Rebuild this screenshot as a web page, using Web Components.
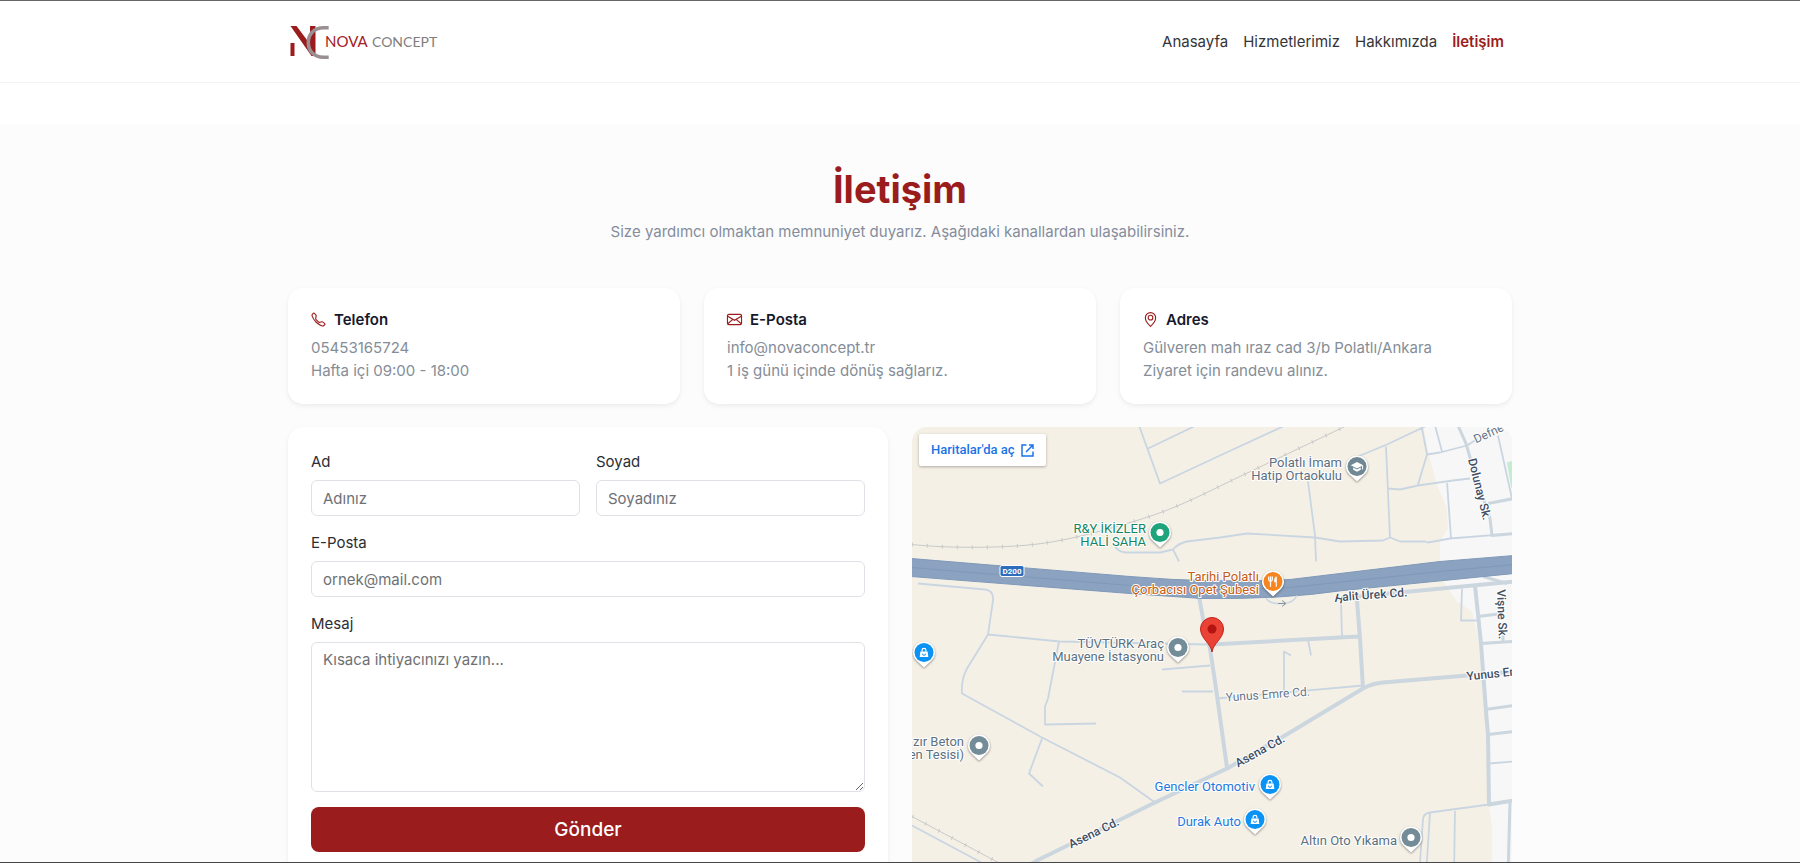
<!DOCTYPE html>
<html lang="tr">
<head>
<meta charset="utf-8">
<meta name="viewport" content="width=device-width, initial-scale=1">
<title>İletişim – Nova Concept</title>
<style>
  body { margin: 0; font: 15px/23px Inter, "Liberation Sans", sans-serif; color: #2b2e33; }
</style>
</head>
<body>
<nova-page>
  <nova-header slot="header">
    <a href="#anasayfa">Anasayfa</a>
    <a href="#hizmetlerimiz">Hizmetlerimiz</a>
    <a href="#hakkimizda">Hakkımızda</a>
    <a href="#iletisim" aria-current="page">İletişim</a>
  </nova-header>
  <contact-intro>
    <span slot="title">İletişim</span>
    Size yardımcı olmaktan memnuniyet duyarız. Aşağıdaki kanallardan ulaşabilirsiniz.
  </contact-intro>
  <card-row columns="3">
    <info-card icon="phone"><span slot="title">Telefon</span><div>05453165724</div><div>Hafta içi 09:00 - 18:00</div></info-card>
    <info-card icon="mail"><span slot="title">E-Posta</span><div>info@novaconcept.tr</div><div>1 iş günü içinde dönüş sağlarız.</div></info-card>
    <info-card icon="pin"><span slot="title">Adres</span><div>Gülveren mah ıraz cad 3/b Polatlı/Ankara</div><div>Ziyaret için randevu alınız.</div></info-card>
  </card-row>
  <card-row columns="2">
    <contact-form></contact-form>
    <location-map></location-map>
  </card-row>
</nova-page>

<script>
const define = (name, html, setup) => {
  const template = document.createElement('template');
  template.innerHTML = html;
  customElements.define(name, class extends HTMLElement {
    constructor() {
      super();
      this.attachShadow({ mode: 'open' }).append(template.content.cloneNode(true));
    }
    connectedCallback() { if (setup) setup(this, this.shadowRoot); }
  });
};

define('nova-page', `
<style>
  :host { display: block; box-sizing: border-box; height: 100vh; overflow: auto; scrollbar-width: none;
    border-top: 1px solid #66656a; border-bottom: 1px solid #47474a; background: #fff; }
  main { margin-top: 41px; padding: 42px 24px 45px; background: #fcfcfd; }
  .inner { max-width: 1224px; margin: 0 auto; display: grid; gap: 23px; }
</style>
<slot name="header"></slot>
<main><div class="inner"><slot></slot></div></main>`);

define('nova-logo', `
<style>
  :host { display: block; }
  a, svg { display: block; }
  text { font-family: Lato, "Liberation Sans", sans-serif; font-size: 15px; }
</style>
<a href="#anasayfa" aria-label="Nova Concept">
<svg width="160" height="36" viewBox="0 0 160 36">
  <g fill="#9b1c1c">
    <path d="M2.5 19h4v13h-4zM2.500 2h6L22 20V2h5.500v30h-4z"/>
  </g>
  <path d="M40.700 3.800h-5.200C26 3.800 20.300 10 20.300 18.500S26 33.200 35.500 33.200h5.200" fill="none" stroke="#9a9093" stroke-width="3.600"/>
  <text x="37" y="23" fill="#a32025">NOVA</text>
  <text x="84" y="23" fill="#827d7d" style="font-size:14px">CONCEPT</text>
</svg></a>`);

define('nova-header', `
<style>
  :host { display: block; padding: 0 24px; border-bottom: 1px solid #f3f3f4; background: #fff; }
  .bar { max-width: 1224px; height: 81px; margin: 0 auto; display: flex; align-items: center; justify-content: space-between; }
  nav { display: flex; gap: 15px; padding-right: 8px; }
  ::slotted(a) { color: #333538; text-decoration: none; }
  ::slotted(a[aria-current]) { color: #9b1c1c; font-weight: 600; }
</style>
<div class="bar"><nova-logo></nova-logo><nav><slot></slot></nav></div>`);

define('contact-intro', `
<style>
  :host { display: block; text-align: center; margin-bottom: 22px; }
  h1 { margin: 0 0 8px; font-size: 38px; line-height: 46px; font-weight: 700; color: #9b1c1c; }
  p { margin: 0; color: #858d9b; }
</style>
<h1><slot name="title"></slot></h1><p><slot></slot></p>`);

define('card-row', `
<style>
  :host { display: grid; gap: 24px; grid-template-columns: repeat(2, minmax(0, 1fr)); }
  :host([columns="3"]) { grid-template-columns: repeat(3, minmax(0, 1fr)); }
  @media (max-width: 760px) { :host, :host([columns="3"]) { grid-template-columns: minmax(0, 1fr); } }
</style>
<slot></slot>`);

const icons = {
  phone: '<path d="M3.654 1.328a.678.678 0 0 0-1.015-.063L1.605 2.300c-.483.484-.661 1.169-.450 1.770a17.600 17.600 0 0 0 4.168 6.608 17.600 17.600 0 0 0 6.608 4.168c.601.211 1.286.033 1.770-.450l1.034-1.034a.678.678 0 0 0-.063-1.015l-2.307-1.794a.680.680 0 0 0-.580-.122l-2.190.547a1.750 1.750 0 0 1-1.657-.459L5.482 8.062a1.750 1.750 0 0 1-.460-1.657l.548-2.190a.680.680 0 0 0-.122-.580z"/>',
  mail: '<rect x=".5" y="2.500" width="15" height="11" rx="1.500"/><path d="M.8 4.500 8 8.900l7.200-4.400M.8 12.500l5.400-4.600M15.200 12.500l-5.400-4.600"/>',
  pin: '<path d="M8 15.400s5.500-5 5.500-9.200a5.500 5.500 0 0 0-11 0C2.500 10.400 8 15.400 8 15.400z"/><circle cx="8" cy="6" r="2.500"/>'
};
define('info-card', `
<style>
  :host { display: block; padding: 22px 23px; border-radius: 15px; background: #fff; box-shadow: 0 2px 5px rgba(0,0,0,.07); color: #858d97; }
  h2 { display: flex; align-items: center; gap: 8px; margin: 0 0 7px; font-size: 15px; line-height: 19px; font-weight: 600; color: #15182a; }
  svg { width: 15px; height: 15px; fill: none; stroke: #9b1c1c; stroke-width: 1.200; overflow: visible; }
</style>
<h2><svg viewBox="0 0 16 16" aria-hidden="true"></svg><slot name="title"></slot></h2>
<slot></slot>`, (el, root) => {
  root.querySelector('svg').innerHTML = icons[el.getAttribute('icon')];
});

define('contact-form', `
<style>
  :host { display: block; padding: 23px; border-radius: 15px; background: #fff; box-shadow: 0 2px 5px rgba(0,0,0,.07); }
  form { display: grid; grid-template-columns: 1fr 1fr; gap: 15px 16px; }
  .field { display: grid; gap: 7px; min-width: 0; }
  .wide { grid-column: 1 / -1; }
  label { color: #2b2e33; }
  input, textarea { box-sizing: border-box; width: 100%; min-width: 0; margin: 0; padding: 5px 11px; border: 1px solid #dee2e6;
    border-radius: 6px; background: #fff; font: inherit; color: inherit; display: block; outline: none; }
  input { height: 36px; }
  textarea { height: 150px; resize: vertical; }
  ::placeholder { color: #6e7174; opacity: 1; }
  button { height: 45px; border: 0; border-radius: 8px; background: #9b1c1c; color: #fff; font: 500 19px/28px Inter, "Liberation Sans", sans-serif; cursor: pointer; }
</style>
<form>
  <div class="field"><label for="ad">Ad</label><input id="ad" type="text" placeholder="Adınız"></div>
  <div class="field"><label for="soyad">Soyad</label><input id="soyad" type="text" placeholder="Soyadınız"></div>
  <div class="field wide"><label for="eposta">E-Posta</label><input id="eposta" type="email" placeholder="ornek@mail.com"></div>
  <div class="field wide"><label for="mesaj">Mesaj</label><textarea id="mesaj" placeholder="Kısaca ihtiyacınızı yazın..."></textarea></div>
  <button class="wide" type="button">Gönder</button>
</form>`);

const glyphs = {
  dot: '<circle r="3.600" fill="#fff"/>',
  bag: '<path d="M-3.600-1h7.200L4.300 4.500h-8.600z" fill="#fff"/><path d="M-1.900-1v-1.200a1.900 1.900 0 0 1 3.800 0V-1" fill="none" stroke="#fff" stroke-width="1.200"/><path d="M-1.600 1.200a1.600 1.600 0 0 0 3.200 0" fill="none" stroke="#0a93f5"/>',
  school: '<path d="M0-4.500 6.200-1.200 0 2.100l-6.200-3.300z" fill="#fff"/><path d="M-3.800 1v2.300L0 5.300l3.800-2V1L0 3z" fill="#fff"/><path d="M5.600-1v4" stroke="#fff"/>',
  food: '<path d="M-4.300-5v3a1.800 1.800 0 0 0 3.600 0v-3M-2.500-5V5.200" fill="none" stroke="#fff" stroke-width="1.200"/><path d="M3.800-5C1.800-5 1-3 1.200.8h1.500v4.400h1.100z" fill="#fff"/>'
};
const pin = (x, y, color, glyph = 'dot') => `
  <g transform="translate(${x} ${y})" class="poi"><path d="M0 15-7.500 8A11 11 0 1 1 7.500 8z" fill="#fff"/><circle r="9.500" fill="${color}"/>${glyphs[glyph]}</g>`;
const label = (x, y, color, lines) => lines.map((t, i) => `<text x="${x}" y="${y + 13 * i}" text-anchor="end" fill="${color}">${t}</text>`).join('');
const street = (x, y, angle, text, cls = 'street', turn = '') => `<text class="${cls}" transform="translate(${x} ${y}) rotate(${angle})" ${turn && `rotate="${turn}"`}>${text}</text>`;

define('location-map', `
<style>
  :host { display: block; position: relative; min-height: 448px; border-radius: 15px; overflow: hidden; background: #f5f0e6; }
  svg.map { display: block; width: 100%; height: 100%; position: absolute; inset: 0; }
  text { font-family: Roboto, "Liberation Sans", sans-serif; font-size: 13px; paint-order: stroke; stroke: #fff; stroke-width: 2px; stroke-linejoin: round; }
  .street { font-size: 12px; font-weight: 500; fill: #414e62; }
  .side { font-size: 12px; fill: #687586; }
  .sign { font-size: 8px; font-weight: 700; fill: #fff; stroke: none; }
  .minor, .major { fill: none; stroke: #c9d6e2; stroke-width: 1.800; stroke-linejoin: round; }
  .major { stroke: #cbd6df; stroke-width: 4; }
  .poi { filter: drop-shadow(0 1px 1px rgba(0,0,0,.4)); }
  a { position: absolute; top: 7px; left: 7px; box-sizing: border-box; height: 32px; padding: 0 12px; display: flex; align-items: center; gap: 6px;
    background: #fff; border-radius: 2px; box-shadow: 0 1px 3px rgba(0,0,0,.3); color: #1a73e8; text-decoration: none;
    font: 500 13px/20px Roboto, "Liberation Sans", sans-serif; }
</style>
<svg class="map" viewBox="0 0 600 449" preserveAspectRatio="xMidYMid slice" aria-label="Harita">
  <path fill="#f7f7f7" d="M511-1 517 28 525 59 535 82 536 102 528 115V150L545 175 560 185 566 210 573 285 577 378 580 400V450H602V-1z"/>
  <path fill="#c3ecd0" d="M595 36 602 34V67L599 60z"/>
  <g fill="none" stroke="#c8c9c9">
    <path d="M0 118C28 121 71 122 111 119S188 105 228 93 300 63 330 49L435-1M0 390 105 446"/>
    <path stroke-width="4" stroke-dasharray="1 14" d="M0 118C28 121 71 122 111 119S188 105 228 93 300 63 330 49L435-1M0 390 105 446"/>
  </g>
  <path class="minor" d="M227-1 248 57 308 29 373-1M236 22 284-1M203 120Q207 126 215 126H248L261 123Q266 117 275 115L308 111 335 107 403 111 428 115 471 114 478 111 488 115H513L516 116 538 112 602 107M261 123 267 135
    M6 157 73 163Q82 164 81 174L76 208 55 242Q49 253 50 267L130 311 208 351 243 376M76 208 148 215 296 218M147 215 136 272 133 280V298L184 297M130 312 117 347 131 360M250 243 298 239M270 265H301M0 399 88 446
    M429 175 430 210M372 265V225L379 229M396 213 399 229M305 272 451 259M550 162 549 194H565M441 32 475 18 515-1M474 20 478 111M396 55 403 109 404 135M476 62 488 63 506 59 541 54 558 52M510 2 515 28 506 58M515 28 528 26 555 19 566 12M523-1 530 25M586 9 600 72M535 55 539 112M577 337 602 335
    M577 378 518 386Q511 387 511 393L507 450M518 386 514 450M543 383 542 450"/>
  <path class="major" d="M287 170 291 192 298 222 303 255 315 341M105 446 125 434 243 376 315 342 373 309 451 262Q460 257 471 256L555 249 602 245M300 218 446 210M445 174 448 212 451 262M430 171 498 165 602 155M563 159 569 217 574 285 576 308 577 378 602 374"/>
  <path class="major" style="stroke-width:3" d="M546-1 554 17 560 38 578 92 580 109 602 107M576 77 602 72M566 190 590 187M569 217 602 215M591 217V209M573 283 602 279M576 308 602 305M598 375 596 450M571 150 595 157"/>
  <path fill="#8ba3c0" d="M-1 132 218 150Q300 157 378 153L528 135 602 129V147L431 164Q370 173 290 172L218 167-1 150z"/>
  <path fill="none" stroke="#7f99b9" d="M-1 132 218 150Q300 157 378 153L528 135 602 129M-1 141 218 159Q310 166 378 161L528 145 602 138M602 147 431 164Q370 173 290 172L218 167-1 150"/>
  <path fill="none" stroke="#c9d6e2" stroke-width="1.500" d="M354 172Q358 177 366 177H372Q382 176 385 169"/>
  <path fill="none" stroke="#8796a1" d="M366 177H373M370 174 374 177 370 180"/>
  <rect x="88" y="139" width="24" height="11" rx="2" fill="#2d6dbb" stroke="#fff"/>
  <text class="sign" x="100" y="147" text-anchor="middle">D200</text>

  ${label(430, 40, '#5b7080', ['Polatlı İmam', 'Hatip Ortaokulu'])}
  ${label(234, 106, '#16845f', ['R&amp;Y İKİZLER', 'HALİ SAHA'])}
  ${label(347, 154, '#c65c14', ['Tarihi Polatlı', 'Çorbacısı Opet Şubesi'])}
  ${label(252, 221, '#5b7080', ['TÜVTÜRK Araç', 'Muayene İstasyonu'])}
  ${label(52, 319, '#5b7080', ['zır Beton', 'en Tesisi)'])}
  ${label(343, 364, '#2478e0', ['Gencler Otomotiv'])}
  ${label(329, 399, '#2478e0', ['Durak Auto'])}
  ${label(485, 418, '#5b7080', ['Altın Oto Yıkama'])}
  ${street(314, 275, -4, 'Yunus Emre Cd.', 'side')}
  ${street(564, 17, -25, 'Defne', 'side')}
  ${street(326, 341, -29, 'Asena Cd.')}
  ${street(159, 422, -26, 'Asena Cd.')}
  ${street(422, 175, -4, 'Halit Ürek Cd.', 'street', '20 0')}
  ${street(556, 33, 76, 'Dolunay Sk.')}
  ${street(585, 163, 88, 'Vişne Sk.')}
  ${street(555, 254, -6, 'Yunus Em')}
  ${pin(445, 40, '#6f8894', 'school')}
  ${pin(248, 106, '#1fa37a')}
  ${pin(361, 155, '#f6851f', 'food')}
  ${pin(266, 221, '#738c97')}
  ${pin(67, 319, '#738c97')}
  ${pin(12, 226, '#0a93f5', 'bag')}
  ${pin(358, 358, '#0a93f5', 'bag')}
  ${pin(343, 393, '#0a93f5', 'bag')}
  ${pin(499, 411, '#738c97')}
  <path d="M300 225.500C299 217 288.500 212 288.500 202.500a11.500 11.500 0 0 1 23 0C311.500 212 301 217 300 225.500z" fill="#ea4335" stroke="#c5221f"/>
  <circle cx="300" cy="202.500" r="4.500" fill="#b31412"/>
</svg>
<a href="#harita">Haritalar'da aç
  <svg width="13" height="13" viewBox="0 0 13 13" fill="none" stroke="currentColor" stroke-width="1.500" aria-hidden="true"><path d="M5.500 1H1v11h11V7.500M8 1h4v4M12 1 5 8"/></svg></a>`);
</script>
</body>
</html>
